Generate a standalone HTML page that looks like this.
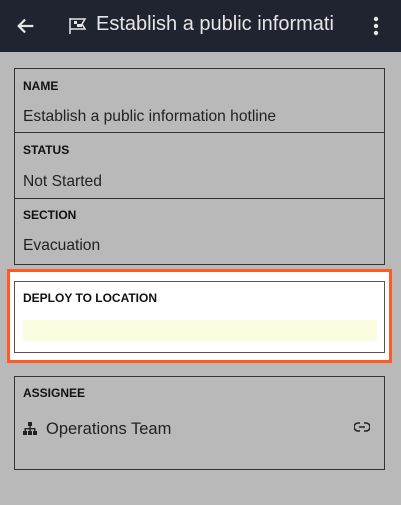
<!DOCTYPE html>
<html><head><style>
body{margin:0;width:401px;height:505px;background:#b9b9b9;font-family:"Liberation Sans",sans-serif;position:relative;overflow:hidden;color:#222}
.hdr{position:absolute;left:0;top:0;width:401px;height:52px;background:#1f2430;color:#e6e6e6}
.box{position:absolute;left:14px;width:369px;border:1px solid #333}
.lbl{position:absolute;left:8px;font-size:12px;font-weight:bold;color:#111}
.val{position:absolute;left:8px;font-size:15.6px;color:#222}
.div{position:absolute;left:0;width:369px;border-top:1px solid #333}
</style></head><body>
<div class="hdr">
<svg style="position:absolute;left:15px;top:15px" width="22" height="22" viewBox="0 0 24 24"><path d="M20 12H5M11 5l-7 7 7 7" stroke="#e6e6e6" stroke-width="2.4" fill="none"/></svg>
<svg style="position:absolute;left:68px;top:17px" width="20" height="18" viewBox="0 0 20 18"><path d="M2 1v16M2 2h15l-3 5 3 5H2" stroke="#e6e6e6" stroke-width="1.5" fill="none"/><path d="M6 4h3v3H6zM11 7h3v3h-3zM9 7h2v3H9z" fill="#e6e6e6"/></svg>
<div style="position:absolute;left:96px;top:13px;font-size:20px;white-space:nowrap;width:244px;overflow:hidden">Establish a public informati</div>
<svg style="position:absolute;left:372px;top:16px" width="8" height="20"><circle cx="4" cy="3" r="2.2" fill="#e6e6e6"/><circle cx="4" cy="10" r="2.2" fill="#e6e6e6"/><circle cx="4" cy="17" r="2.2" fill="#e6e6e6"/></svg>
</div>
<div class="box" style="top:68px;height:195px">
<div class="lbl" style="top:10px">NAME</div><div class="val" style="top:39px">Establish a public information hotline</div>
<div class="div" style="top:63px"></div>
<div class="lbl" style="top:74px">STATUS</div><div class="val" style="top:104px">Not Started</div>
<div class="div" style="top:129px"></div>
<div class="lbl" style="top:139px">SECTION</div><div class="val" style="top:168px">Evacuation</div>
</div>
<div style="position:absolute;left:7px;top:269px;width:379px;height:88px;border:3px solid #ff5a24;background:#fff"></div>
<div class="box" style="top:281px;height:70px;background:#fff;border-color:#555">
<div class="lbl" style="top:9px">DEPLOY TO LOCATION</div>
<div style="position:absolute;left:8px;top:38px;width:354px;height:21px;background:#fbfde0"></div>
</div>
<div class="box" style="top:376px;height:92px">
<div class="lbl" style="top:9px">ASSIGNEE</div>
<svg style="position:absolute;left:8px;top:45px" width="14" height="14" viewBox="0 0 14 14" fill="#222"><rect x="5" y="0" width="4" height="4"/><rect x="6.3" y="4" width="1.4" height="3"/><rect x="1.5" y="6" width="11" height="1.4"/><rect x="1.5" y="6" width="1.4" height="3"/><rect x="11.1" y="6" width="1.4" height="3"/><rect x="6.3" y="6" width="1.4" height="3"/><rect x="0" y="9" width="4" height="4"/><rect x="5" y="9" width="4" height="4"/><rect x="10" y="9" width="4" height="4"/></svg>
<div class="val" style="left:31px;top:43px;font-size:16.5px">Operations Team</div>
<svg style="position:absolute;left:339px;top:45px" width="16" height="10" viewBox="0 0 16 10"><path d="M6 1H4a4 4 0 000 8h2M10 1h2a4 4 0 010 8h-2M5 5h6" stroke="#222" stroke-width="1.6" fill="none"/></svg>
</div>
</body></html>
